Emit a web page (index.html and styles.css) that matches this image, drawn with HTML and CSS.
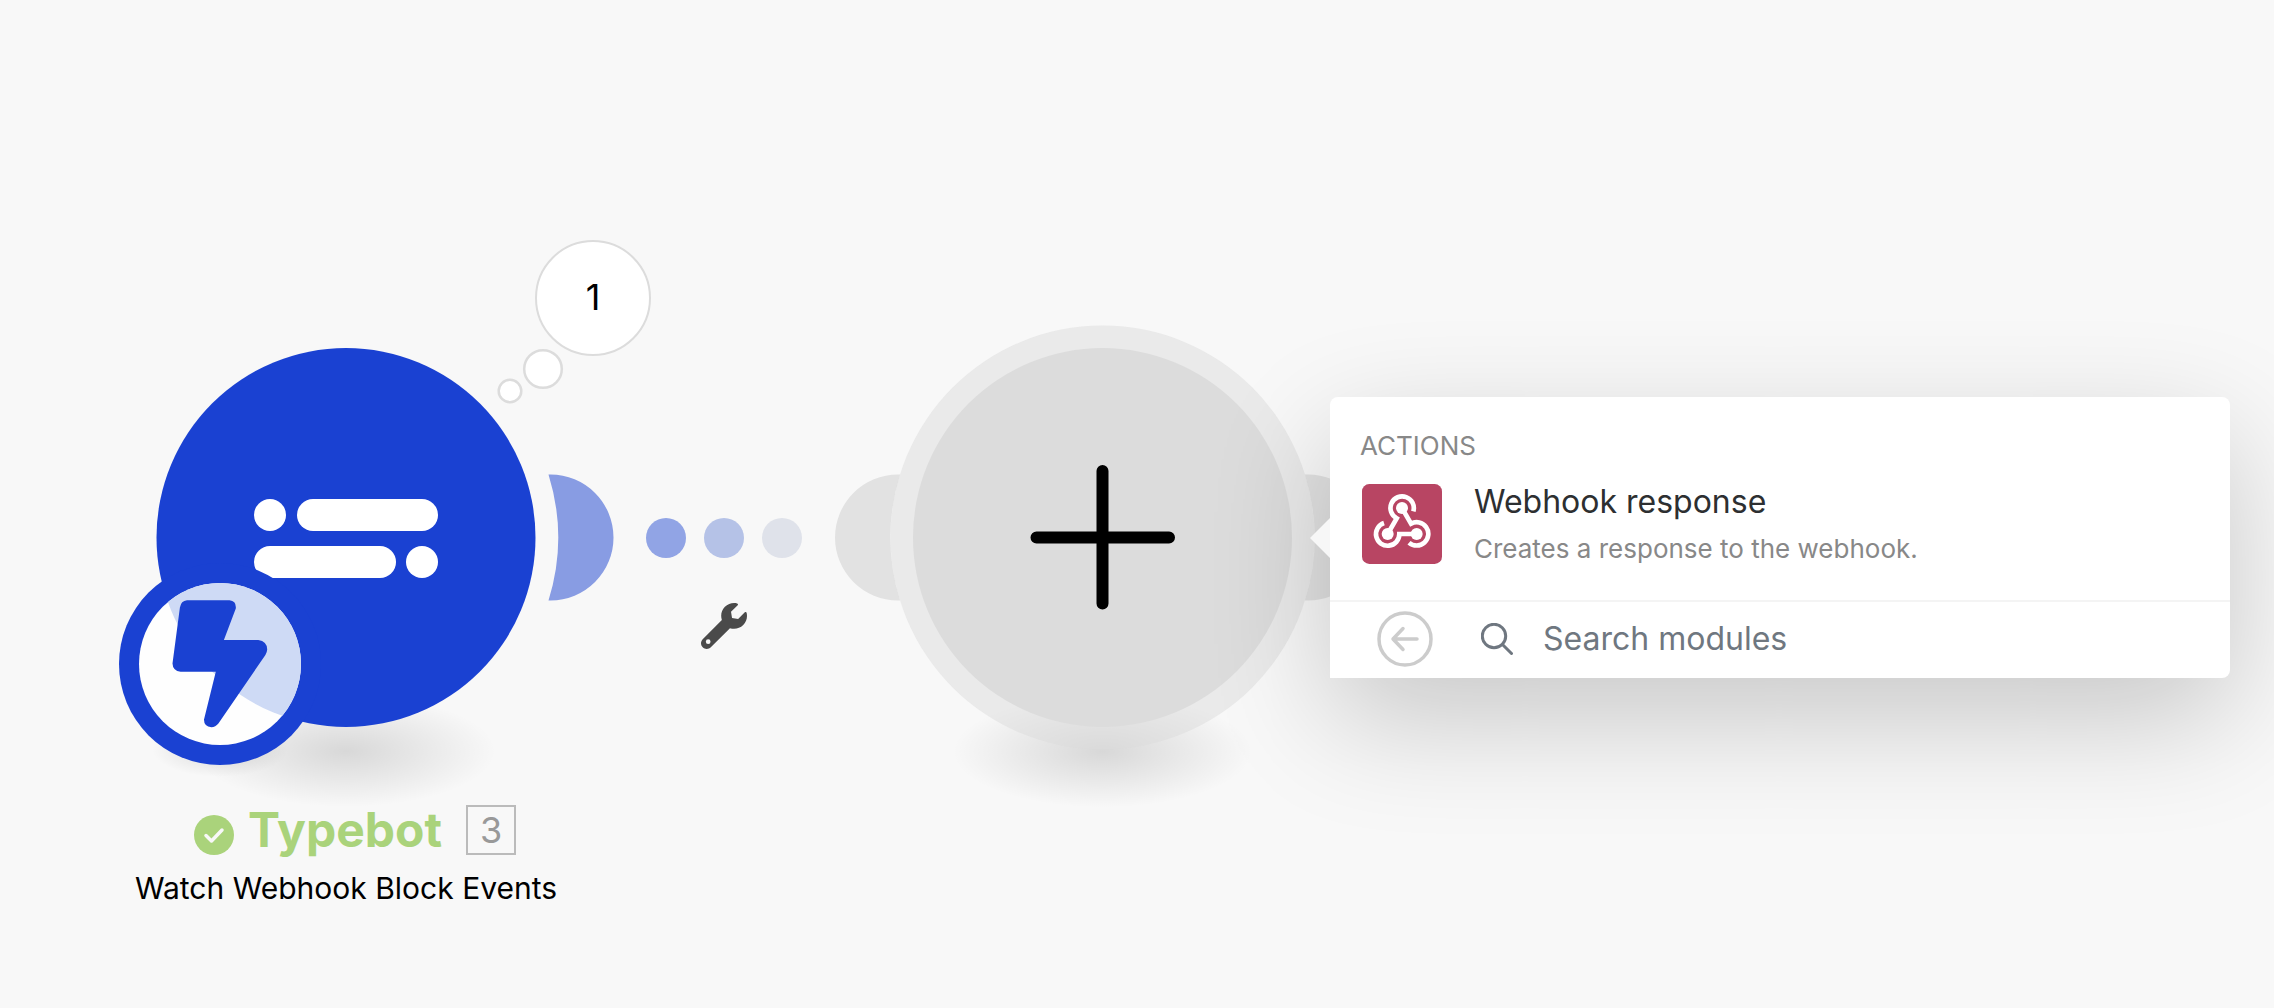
FILE: index.html
```html
<!DOCTYPE html>
<html lang="en">
<head>
<meta charset="utf-8">
<title>Scenario editor</title>
<link rel="stylesheet" href="styles.css">
</head>
<body>
<main class="canvas">
  <section class="node trigger">
    <svg class="trigger-art" viewBox="96 230 500 562" aria-hidden="true">
      <defs>
        <radialGradient id="floor"><stop offset="0" stop-opacity=".13"/><stop offset=".5" stop-opacity=".065"/><stop offset="1" stop-opacity="0"/></radialGradient>
        <clipPath id="inner"><circle cx="220" cy="664" r="81"/></clipPath>
      </defs>
      <ellipse cx="346" cy="751" rx="150" ry="56" fill="url(#floor)"/>
      <ellipse cx="220" cy="749" rx="68" ry="28" fill="url(#floor)"/>
      <circle cx="346" cy="537.500" r="189.500" fill="#1a41d2"/>
      <path d="M548.500 474.500H550.500A63 63 0 0 1 550.500 600.500H548.500A212 212 0 0 0 548.500 474.500z" fill="#889ce3"/>
      <g fill="#fff">
        <circle cx="270" cy="515" r="16"/>
        <rect x="297" y="499" width="141" height="32" rx="16"/>
        <rect x="254" y="546" width="142" height="32" rx="16"/>
        <circle cx="422" cy="562" r="16"/>
      </g>
      <circle cx="220" cy="664" r="101" fill="#1a41d2"/>
      <circle cx="220" cy="664" r="81" fill="#fefefe"/>
      <circle cx="346" cy="537.500" r="189.500" fill="#cedaf5" clip-path="url(#inner)"/>
      <path d="M187 600.300H229.500Q236.500 601 235.800 608.500L223.900 640H258.300Q267 641 267.200 649.500Q267 652.500 265.400 655L218.400 723.500Q215.500 727.200 211.400 727.200Q203.800 726.500 204 719.400L215.800 671.700H180.600Q172.800 671 172.500 663.500L179.900 607.500Q181 600.800 187 600.300z" fill="#1a41d2"/>
      <g fill="#fff" stroke="#dcdcdc" stroke-width="2.500">
        <circle cx="543" cy="369" r="18.800"/>
        <circle cx="510" cy="391" r="11.300"/>
      </g>
    </svg>
    <span class="runs">1</span>
    <div class="title">
      <svg class="check" viewBox="0 0 40 40" aria-hidden="true"><circle cx="20" cy="20" r="20" fill="#aad37b"/><path d="M12 20.500L17.500 26L28 15" fill="none" stroke="#f8f8f8" stroke-width="3.500" stroke-linecap="round" stroke-linejoin="round"/></svg>
      <h2 class="name">Typebot</h2>
      <span class="index">3</span>
    </div>
    <p class="event">Watch Webhook Block Events</p>
  </section>

  <div class="link">
    <span class="dots"><i class="dot near"></i><i class="dot mid"></i><i class="dot far"></i></span>
    <button class="wrench" aria-label="Set up a filter">
      <svg viewBox="0 0 512 512" aria-hidden="true"><path fill="#4a4a4a" d="M507.730 109.100c-2.240-9.030-13.540-12.090-20.120-5.510l-74.360 74.360-67.880-11.310-11.310-67.880 74.360-74.360c6.620-6.620 3.430-17.900-5.660-20.160-47.380-11.740-99.550.91-136.580 37.930-39.640 39.640-50.550 97.100-34.050 147.200L18.740 402.760c-24.990 24.990-24.990 65.510 0 90.500 24.990 24.990 65.510 24.990 90.500 0l213.210-213.210c50.120 16.710 107.470 5.680 147.370-34.220 37.070-37.070 49.700-89.320 37.910-136.730z"/><circle cx="80" cy="430" r="26" fill="#f8f8f8"/></svg>
    </button>
  </div>

  <button class="node add" aria-label="Add a module">
    <svg viewBox="0 0 536 500" aria-hidden="true">
      <g fill="#e2e2e2">
        <path d="M63 150.500A63 63 0 0 0 63 276.500H65.100A212 212 0 0 1 65.100 150.500z"/>
        <path d="M473 150.500A63 63 0 0 1 473 276.500H469.900A212 212 0 0 0 469.900 150.500z"/>
      </g>
      <ellipse cx="267.500" cy="427.500" rx="150" ry="56" fill="url(#floor)"/>
      <circle cx="267.500" cy="213.500" r="212" fill="#dcdcdc" fill-opacity=".5"/>
      <circle cx="267.500" cy="213.500" r="189.500" fill="#dcdcdc"/>
      <path d="M267.500 147V279.500M201.500 213.500H334" stroke="#000" stroke-width="12" stroke-linecap="round"/>
    </svg>
  </button>

  <section class="panel">
    <h3 class="heading">ACTIONS</h3>
    <button class="module">
      <svg class="module-icon" viewBox="0 0 240 240" aria-hidden="true">
        <rect width="240" height="240" rx="22" fill="#b84563"/>
        <g fill="none" stroke="#fff" stroke-width="14">
          <path d="M154 82A35 35 0 1 0 104 103L77 150"/>
          <path d="M66 117A35 35 0 1 0 112 150H164"/>
          <path d="M120 72L147 119A35 35 0 1 1 141 176"/>
        </g>
        <g fill="#fff"><circle cx="120" cy="72" r="18"/><circle cx="77" cy="150" r="18"/><circle cx="164" cy="150" r="18"/></g>
      </svg>
      <span class="module-text">
        <span class="module-name">Webhook response</span>
        <span class="module-note">Creates a response to the webhook.</span>
      </span>
    </button>
    <div class="search">
      <button class="back" aria-label="Back">
        <svg viewBox="0 0 56 56" aria-hidden="true"><g fill="none" stroke="#ccc" stroke-width="3.500" stroke-linecap="round" stroke-linejoin="round"><circle cx="28" cy="28" r="26"/><path d="M40 28H16M26 17.500L16 28L26 38.500"/></g></svg>
      </button>
      <label class="field">
        <svg class="glass" viewBox="0 0 32 32" aria-hidden="true"><g fill="none" stroke="#6f7780" stroke-width="3" stroke-linecap="round"><circle cx="13" cy="13" r="11.700"/><path d="M21.500 21.500L30.500 30.500"/></g></svg>
        <input class="query" type="text" placeholder="Search modules" aria-label="Search modules">
      </label>
    </div>
  </section>
</main>
</body>
</html>
```
FILE: styles.css
```css
* { box-sizing: border-box; }

body {
  margin: 0;
  background: #f8f8f8;
  font-family: Inter, "Liberation Sans", sans-serif;
}

h2, h3, p { margin: 0; font-weight: 400; }

button {
  display: block;
  border: 0;
  padding: 0;
  background: none;
  font: inherit;
  text-align: left;
  cursor: pointer;
}

svg { display: block; }

.canvas {
  position: relative;
  min-height: 100vh;
  overflow: hidden;
}

.node { position: absolute; }

/* Trigger module */
.trigger {
  left: 96px;
  top: 230px;
  width: 500px;
  display: flex;
  flex-direction: column;
  align-items: center;
}

.trigger-art {
  width: 500px;
  height: 562px;
  overflow: visible;
}

.runs {
  position: absolute;
  left: 439px;
  top: 10px;
  width: 116px;
  height: 116px;
  border: 2px solid #dcdcdc;
  border-radius: 50%;
  background: #fff;
  font-size: 36px;
  line-height: 110px;
  text-align: center;
}

.title {
  display: flex;
  align-items: center;
  padding: 10px 0 0 18px;
}

.check { width: 40px; height: 40px; margin: 10px 14px 0 0; }

.name {
  font-size: 48px;
  line-height: 56px;
  font-weight: 700;
  color: #aad37b;
}

.index {
  width: 50px;
  height: 50px;
  margin-left: 24px;
  border: 2px solid #bbb;
  font-size: 36px;
  line-height: 46px;
  text-align: center;
  color: #999;
}

.event {
  font-size: 30px;
  line-height: 40px;
  padding-top: 10px;
  white-space: nowrap;
}

/* Route between the modules */
.link {
  position: absolute;
  left: 646px;
  top: 518px;
  width: 156px;
  display: flex;
  flex-direction: column;
  align-items: center;
  gap: 45px;
}

.dots { display: flex; gap: 18px; }
.dot { width: 40px; height: 40px; border-radius: 50%; }
.near { background: #91a4e5; }
.mid { background: #b5c2e7; }
.far { background: #dfe2ea; }

.wrench svg { width: 46px; height: 46px; }

/* Empty module */
.add { left: 835px; top: 324px; }
.add svg { width: 536px; height: 500px; }

/* Module picker */
.panel {
  position: absolute;
  left: 1330px;
  right: 44px;
  top: 397px;
  border-radius: 8px 8px 8px 0;
  background: #fff;
  box-shadow: 0 40px 120px rgba(0, 0, 0, .2);
}

.panel::before {
  content: "";
  position: absolute;
  left: -20px;
  top: 121px;
  border: 20px solid transparent;
  border-left: 0;
  border-right-color: #f7f7f7;
}

.heading {
  padding: 32px 30px 0;
  font-size: 26px;
  line-height: 34px;
  color: #888;
}

.module {
  display: flex;
  align-items: center;
  gap: 32px;
  width: 100%;
  padding: 19px 32px 34px;
}

.module-icon { width: 80px; height: 80px; }

.module-text { display: flex; flex-direction: column; gap: 10px; }
.module-name { font-size: 32px; line-height: 40px; color: #2d2f31; }
.module-note { font-size: 26px; line-height: 34px; color: #888; }

.search {
  display: flex;
  align-items: center;
  gap: 48px;
  padding: 9px 32px 11px 47px;
  border-top: 2px solid #f4f4f4;
}

.back svg { width: 56px; height: 56px; }

.field { display: flex; align-items: center; gap: 30px; flex: 1; }
.glass { width: 32px; height: 32px; }

.query {
  flex: 1;
  min-width: 0;
  border: 0;
  padding: 0;
  background: none;
  font: 400 32px/40px Inter, "Liberation Sans", sans-serif;
  color: #2d2f31;
  outline: 0;
}

.query::placeholder { color: #6f7780; opacity: 1; }
```
